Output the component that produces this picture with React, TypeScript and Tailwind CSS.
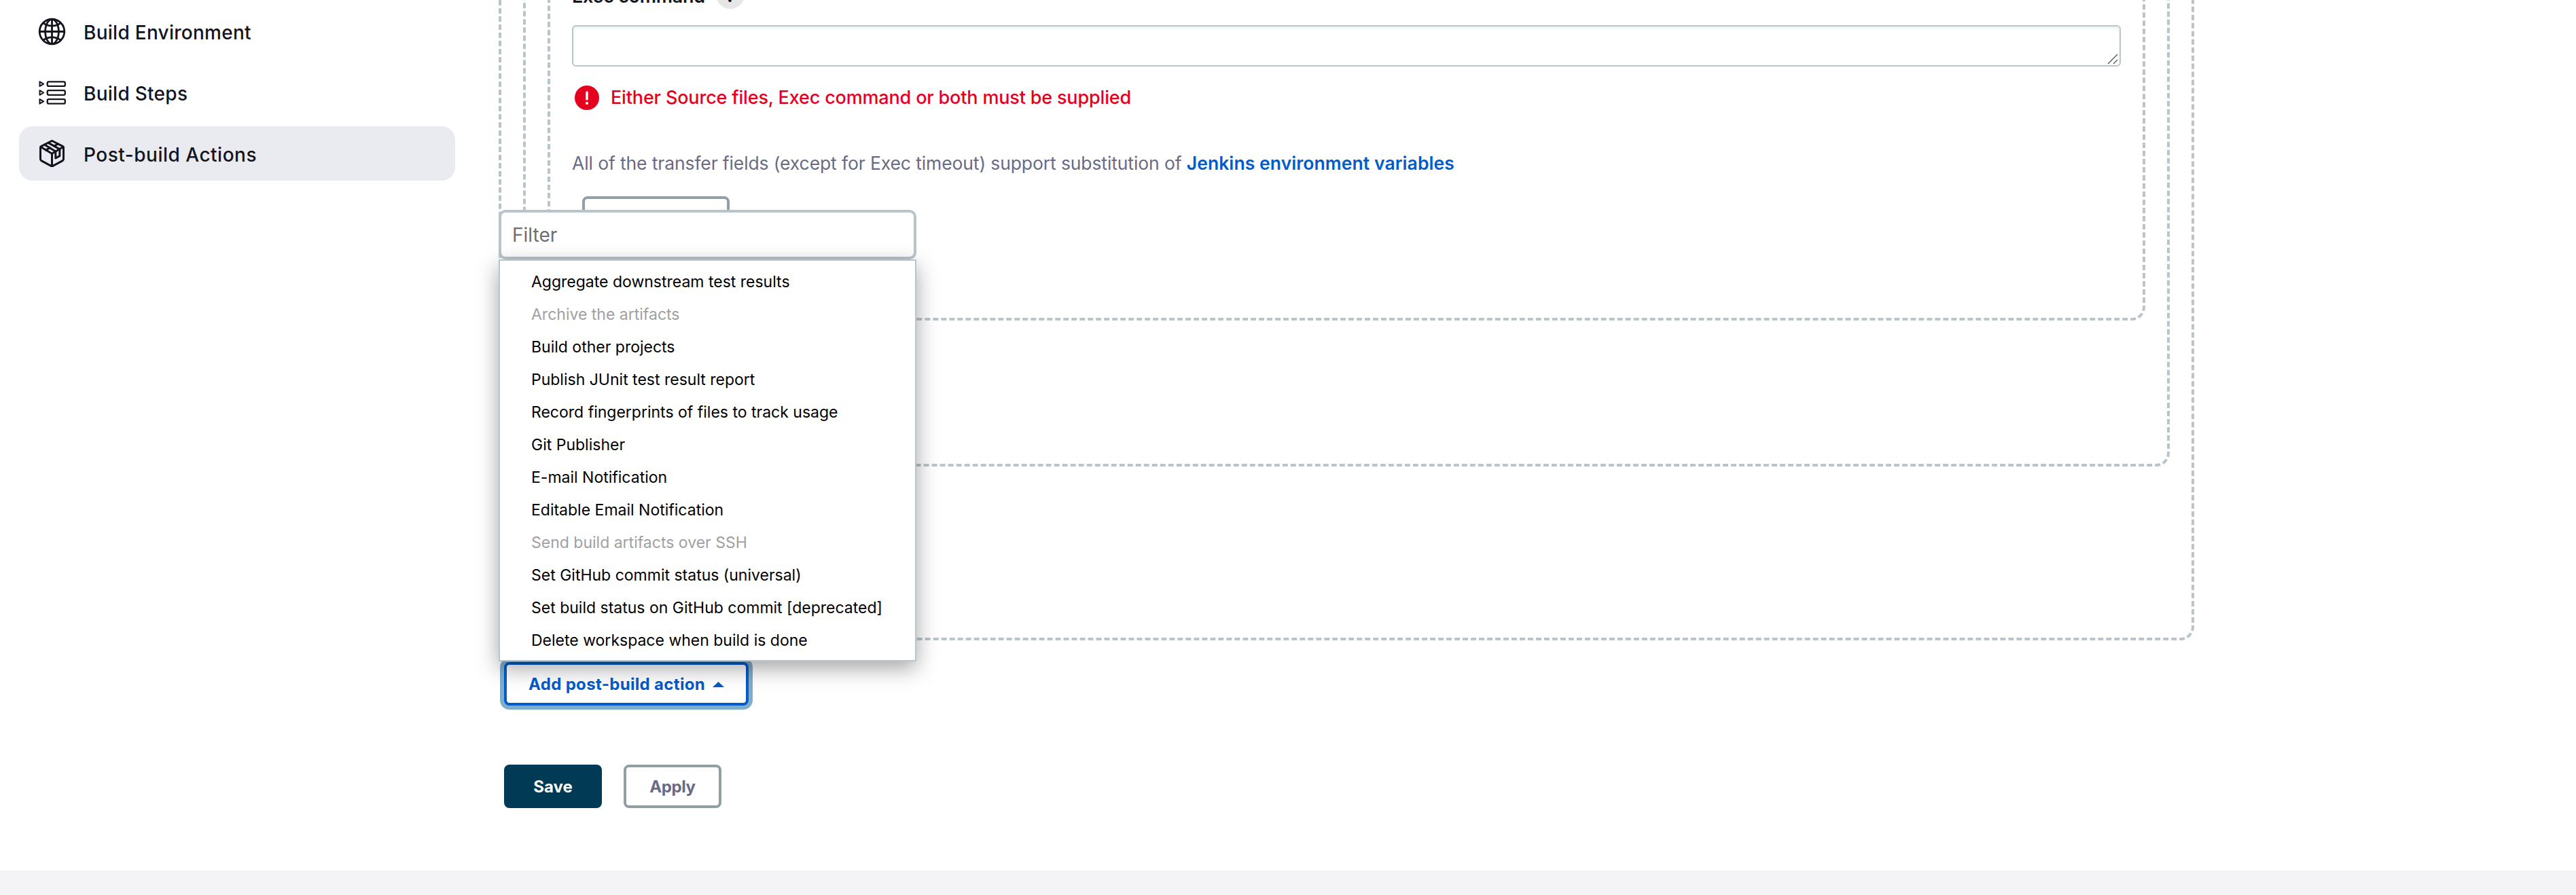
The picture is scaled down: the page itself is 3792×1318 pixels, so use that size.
import type { ReactNode } from "react";
import { IoGlobeOutline } from "react-icons/io5";

type MenuEntry = { label: string; disabled?: boolean };

const menuEntries: MenuEntry[] = [
  { label: "Aggregate downstream test results" },
  { label: "Archive the artifacts", disabled: true },
  { label: "Build other projects" },
  { label: "Publish JUnit test result report" },
  { label: "Record fingerprints of files to track usage" },
  { label: "Git Publisher" },
  { label: "E-mail Notification" },
  { label: "Editable Email Notification" },
  { label: "Send build artifacts over SSH", disabled: true },
  { label: "Set GitHub commit status (universal)" },
  { label: "Set build status on GitHub commit [deprecated]" },
  { label: "Delete workspace when build is done" },
];

function StepsIcon() {
  return (
    <svg
      viewBox="0 0 120 106"
      className="h-[35px] w-10"
      fill="none"
      stroke="currentColor"
      strokeWidth="6"
      strokeLinejoin="round"
    >
      {[14, 53, 92].map((y) => (
        <g key={y}>
          <path d={`M4 ${y - 10}L21 ${y}L4 ${y + 10}Z`} />
          <rect x="38" y={y - 10} width="79" height="20" rx="6" strokeWidth="7" />
        </g>
      ))}
    </svg>
  );
}

function PackageIcon() {
  return (
    <svg
      viewBox="0 0 110 120"
      className="h-10 w-[37px]"
      fill="none"
      stroke="currentColor"
      strokeWidth="9"
      strokeLinecap="round"
      strokeLinejoin="round"
    >
      <path d="M51 6Q55 3 59 6L102 28Q106 30 106 35V85Q106 90 102 92L59 115Q55 117 51 115L8 92Q4 90 4 85V35Q4 30 8 28Z" />
      <path d="M5 31L55 61L105 31M55 61V115" />
      <path d="M22 21L71 51V81L89 71V41L39 13" />
      <path d="M28 45L46 35M64 27L82 18" />
    </svg>
  );
}

function SidebarItem({ icon, label, active }: { icon: ReactNode; label: string; active?: boolean }) {
  return (
    <a
      className={
        active
          ? "flex h-20 items-center gap-6 rounded-[20px] bg-[#eaebf0] pl-[26px] tracking-[0.5px]"
          : "flex h-20 items-center gap-6 rounded-[20px] pl-[26px] tracking-[0.27px]"
      }
    >
      <span className="flex w-[45px] justify-center">{icon}</span>
      <span className="pt-[3px] text-[28px] font-medium leading-10">{label}</span>
    </a>
  );
}

function Sidebar() {
  return (
    <nav className="ml-7 mr-16 flex w-[642px] shrink-0 flex-col gap-[10px] pt-[6px] text-[#14141f]">
      <SidebarItem icon={<IoGlobeOutline className="size-[45px]" />} label="Build Environment" />
      <SidebarItem icon={<StepsIcon />} label="Build Steps" />
      <SidebarItem icon={<PackageIcon />} label="Post-build Actions" active />
    </nav>
  );
}

function TransferSet() {
  return (
    <div className="flex h-[664px] flex-col rounded-[20px] border-4 border-dashed border-[#bac5ca] px-8 pt-[159px]">
      <div className="flex h-[42px] shrink-0 items-center">
        <span className="w-[212px] pt-[5px] text-[27px] font-semibold leading-10 tracking-[-0.3px] text-[#14141f]">
          Exec command
        </span>
        <span className="flex size-[42px] items-center justify-center rounded-full bg-[#e6e6e6] pt-[2px] text-[26px] font-bold text-[#14141f]">
          ?
        </span>
      </div>
      <div className="mt-6 flex h-[61px] shrink-0 items-end justify-end rounded-[6px] border-2 border-[#bac5ca] shadow-[inset_0_3px_4px_rgba(0,0,0,0.07)]">
        <svg viewBox="0 0 18 18" className="size-[18px]" stroke="#555" strokeWidth="1.4">
          <path d="M1 16L15 2M9 16L15 10" />
        </svg>
      </div>
      <div className="mt-7 flex h-9 shrink-0 items-center gap-[17px] pl-1 text-[#e6001f]">
        <svg viewBox="0 0 36 36" className="size-9">
          <circle cx="18" cy="18" r="18" fill="currentColor" />
          <path d="M18 10V20" stroke="#fff" strokeWidth="3.4" strokeLinecap="round" />
          <circle cx="18" cy="26" r="2.1" fill="#fff" />
        </svg>
        <span className="text-[27px] font-medium leading-9 tracking-[-0.165px]">
          Either Source files, Exec command or both must be supplied
        </span>
      </div>
      <div className="mt-[58px] h-10 shrink-0 whitespace-nowrap text-[26.5px] leading-[40px] tracking-[-0.11px] text-[#6a6a85]">
        All of the transfer fields (except for Exec timeout) support substitution of{" "}
        <a className="font-semibold tracking-[0.08px] text-[#005bcc]">Jenkins environment variables</a>
      </div>
      <div className="ml-[15px] mt-[29px] h-16 w-[217px] shrink-0 rounded-lg border-4 border-[#919fa8]" />
    </div>
  );
}

function ActionMenu() {
  return (
    <div className="absolute -left-2 -top-[666px] w-[615px]">
      <div className="flex h-[73px] items-center rounded-[10px] border-4 border-[#bac5ca] bg-white pl-4 text-[28px] leading-10 text-[#6e6e6e]">
        Filter
      </div>
      <ul className="relative h-[592px] border-2 border-[#bac5ca] bg-white pt-[7px] shadow-[0_10px_30px_rgba(0,0,0,0.36)]">
        {menuEntries.map((entry) => (
          <li
            key={entry.label}
            className={
              entry.disabled
                ? "h-12 whitespace-nowrap pl-[46px] text-[23px] leading-[48px] text-[#a0a0a0]"
                : "h-12 whitespace-nowrap pl-[46px] text-[23px] leading-[48px] text-black"
            }
          >
            {entry.label}
          </li>
        ))}
      </ul>
    </div>
  );
}

export default function App() {
  return (
    <div className="flex h-[1318px] w-full flex-col overflow-hidden bg-white font-['Inter',sans-serif]">
      <div className="flex h-[1282px] shrink-0">
        <Sidebar />
        <main className="-mt-[200px] w-[2496px] shrink-0">
          <div className="h-[1143px] rounded-[20px] border-4 border-dashed border-[#bac5ca] px-8">
            <div className="h-[883px] rounded-[20px] border-4 border-dashed border-[#bac5ca] px-8">
              <TransferSet />
            </div>
          </div>
          <div className="relative ml-2 mt-8 w-[360px]">
            <button className="flex h-16 w-full items-center rounded-lg border-4 border-[#005bcc] bg-white pl-8 pt-[2px] text-[24px] font-bold tracking-[0.33px] text-[#005bcc] shadow-[0_0_0_6px_#7faeca]">
              Add post-build action
              <svg viewBox="0 0 17 8" className="ml-[11px] h-2 w-[17px]" fill="currentColor">
                <path d="M0 8L8.5 0L17 8Z" />
              </svg>
            </button>
            <ActionMenu />
          </div>
          <div className="ml-2 mt-[87px] flex gap-8 text-[24px] font-bold">
            <button className="h-16 w-36 rounded-lg bg-[#003a55] pt-[2px] text-white">Save</button>
            <button className="h-16 w-36 rounded-lg border-4 border-[#919fa5] bg-white pt-[2px] tracking-[-0.4px] text-[#6a6a85]">
              Apply
            </button>
          </div>
        </main>
      </div>
      <footer className="flex-1 bg-[#f4f4f7]" />
    </div>
  );
}
